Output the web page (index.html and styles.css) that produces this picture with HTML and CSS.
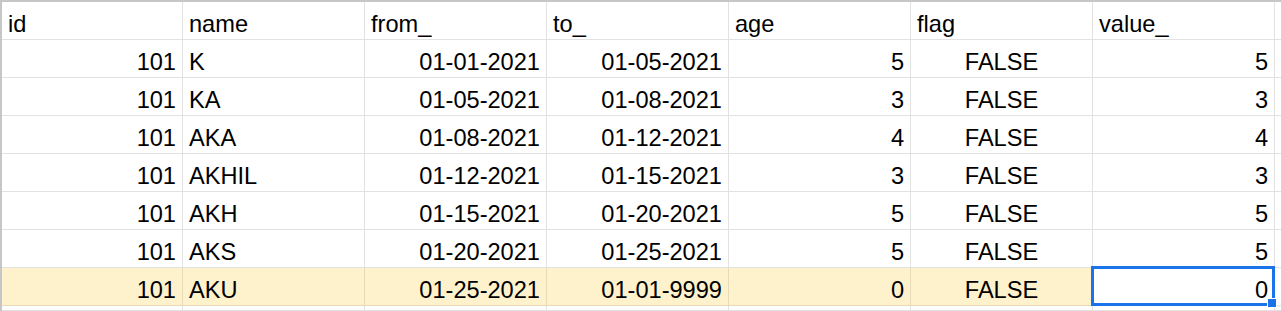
FILE: index.html
```html
<!DOCTYPE html>
<html>
<head>
<meta charset="utf-8">
<link rel="stylesheet" href="styles.css">
</head>
<body>
<div class="sheet">
  <div class="c">id</div><div class="c">name</div><div class="c">from_</div><div class="c">to_</div><div class="c">age</div><div class="c">flag</div><div class="c">value_</div><div class="c"></div>

  <div class="c r">101</div><div class="c">K</div><div class="c r">01-01-2021</div><div class="c r">01-05-2021</div><div class="c r">5</div><div class="c m">FALSE</div><div class="c r">5</div><div class="c"></div>
  <div class="c r">101</div><div class="c">KA</div><div class="c r">01-05-2021</div><div class="c r">01-08-2021</div><div class="c r">3</div><div class="c m">FALSE</div><div class="c r">3</div><div class="c"></div>
  <div class="c r">101</div><div class="c">AKA</div><div class="c r">01-08-2021</div><div class="c r">01-12-2021</div><div class="c r">4</div><div class="c m">FALSE</div><div class="c r">4</div><div class="c"></div>
  <div class="c r">101</div><div class="c">AKHIL</div><div class="c r">01-12-2021</div><div class="c r">01-15-2021</div><div class="c r">3</div><div class="c m">FALSE</div><div class="c r">3</div><div class="c"></div>
  <div class="c r">101</div><div class="c">AKH</div><div class="c r">01-15-2021</div><div class="c r">01-20-2021</div><div class="c r">5</div><div class="c m">FALSE</div><div class="c r">5</div><div class="c"></div>
  <div class="c r">101</div><div class="c">AKS</div><div class="c r">01-20-2021</div><div class="c r">01-25-2021</div><div class="c r">5</div><div class="c m">FALSE</div><div class="c r">5</div><div class="c"></div>
  <div class="c r hl">101</div><div class="c hl">AKU</div><div class="c r hl">01-25-2021</div><div class="c r hl">01-01-9999</div><div class="c r hl">0</div><div class="c m hl">FALSE</div><div class="c r sel">0<span class="handle"></span></div><div class="c"></div>
  <div class="c"></div><div class="c"></div><div class="c"></div><div class="c"></div><div class="c"></div><div class="c"></div><div class="c"></div><div class="c"></div>
</div>
</body>
</html>
```

FILE: styles.css
```css
html, body {
  margin: 0;
  padding: 0;
  background: #ffffff;
  overflow: hidden;
}

.sheet {
  display: grid;
  grid-template-columns: 181px repeat(6, 182px) 1fr;
  grid-template-rows: repeat(8, 38px) 1fr;
  height: 311px;
  box-sizing: border-box;
  overflow: hidden;
  border-top: 2px solid #c6c6c6;
  border-left: 2px solid #c6c6c6;
  font-family: "Liberation Sans", Arial, sans-serif;
  font-size: 23.6px;
  color: #000000;
}

.c {
  box-sizing: border-box;
  border-right: 1px solid #e2e2e2;
  border-bottom: 1px solid #e2e2e2;
  display: flex;
  align-items: flex-end;
  padding: 0 6px 1px 6px;
  line-height: 27px;
  white-space: nowrap;
  position: relative;
}

.r {
  justify-content: flex-end;
}

.m {
  justify-content: center;
}

.hl {
  background: #fef2cd;
  border-right-color: #e6dbb6;
  border-bottom-color: #e6dbb6;
}

.sel {
  background: #ffffff;
  z-index: 1;
}

.sel::after {
  content: "";
  position: absolute;
  left: -2px;
  top: -2px;
  right: -1px;
  bottom: -1px;
  border: 3px solid #1a73e8;
  pointer-events: none;
}

.handle {
  position: absolute;
  right: -3px;
  bottom: -3px;
  width: 8px;
  height: 8px;
  background: #1a73e8;
  border: 1px solid #ffffff;
  z-index: 2;
}
```
